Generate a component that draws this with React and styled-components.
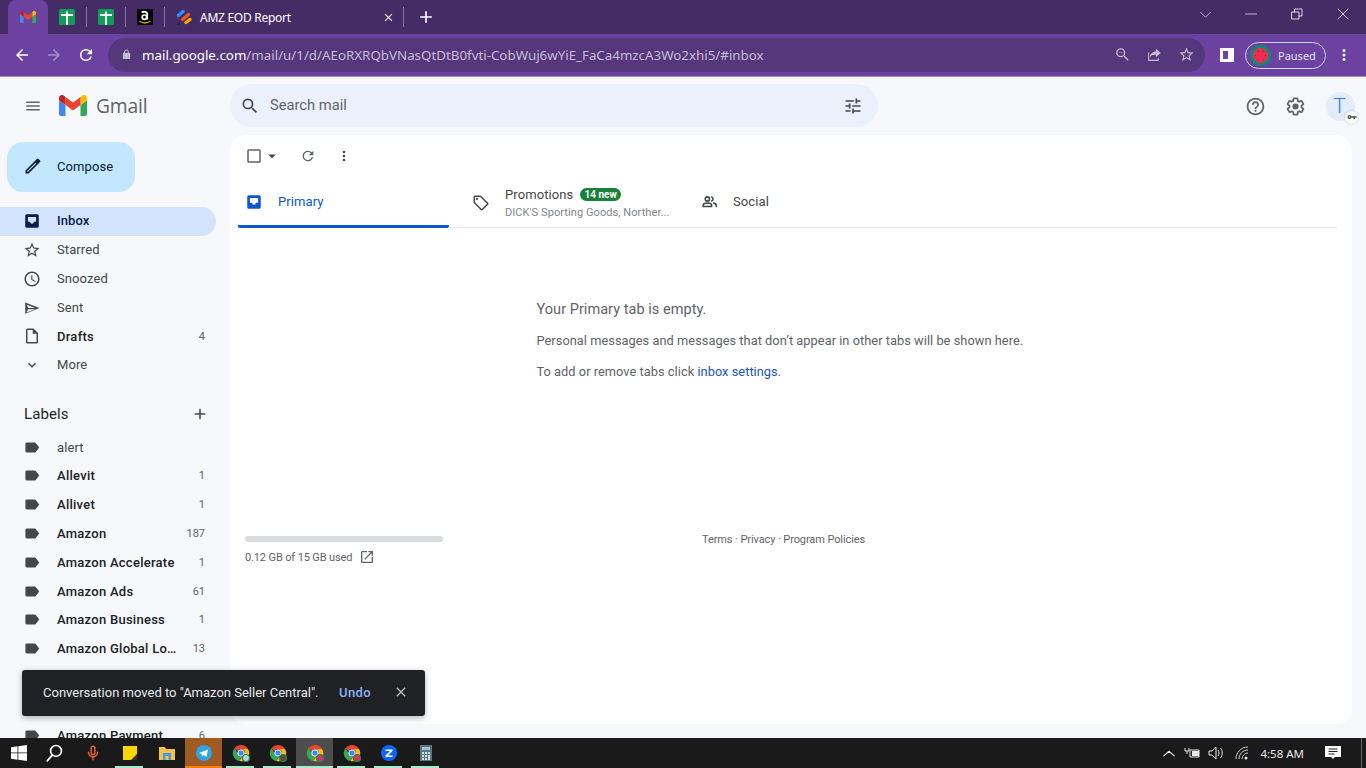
import React from "react";
import styled, { createGlobalStyle } from "styled-components";

const Global = createGlobalStyle`
  html, body { margin: 0; padding: 0; height: 100%; overflow: hidden; background: #f6f8fc; }
  #root { height: 100%; }
  * { box-sizing: border-box; }
`;

const Page = styled.div`
  width: 1366px; height: 768px; display: flex; flex-direction: column; overflow: hidden; position: relative;
  font-family: Roboto, "Liberation Sans", sans-serif; color: #202124;
`;

/* Chrome */
const TabStrip = styled.div`
  height: 34px; flex: none; background: #452c66; display: flex; align-items: flex-start; padding-left: 8px;
  font-family: "Noto Sans", "Open Sans", sans-serif; color: #fff;
`;
const ActiveTab = styled.div`
  width: 40px; height: 34px; background: #6b42a0; border-radius: 8px 8px 0 0; display: flex; align-items: center; justify-content: center;
`;
const PinnedTab = styled.div`
  width: 38px; height: 34px; display: flex; align-items: center; justify-content: center; flex: none;
`;
const Sep = styled.div`
  width: 1px; height: 20px; background: #8a76a4; margin-top: 7px; flex: none;
`;
const WideTab = styled.div`
  width: 238px; height: 34px; display: flex; align-items: center; padding-left: 10px; gap: 7px; font-size: 12px; flex: none;
`;
const TabTitle = styled.span` flex: 1; white-space: nowrap; font-size: 12px; letter-spacing: -0.27px; `;
const TabClose = styled.span` display: flex; margin-right: 8px; `;
const NewTab = styled.div` width: 44px; height: 34px; display: flex; align-items: center; justify-content: center; `;
const StripSpacer = styled.div` flex: 1; `;
const WinButtons = styled.div` display: flex; align-items: center; height: 28px; `;
const WinBtn = styled.div` width: 46px; height: 28px; display: flex; align-items: center; justify-content: center; `;

const Toolbar = styled.div`
  height: 43px; flex: none; background: #6c42a0; border-bottom: 1px solid #a58cc7; display: flex; align-items: center;
  font-family: "Noto Sans", "Open Sans", sans-serif;
`;
const NavIcons = styled.div` display: flex; align-items: center; width: 108px; padding-left: 13px; gap: 14px; flex: none; height: 100%; `;
const Omnibox = styled.div`
  width: 1097px; height: 34px; border-radius: 17px; background: #55377b; display: flex; align-items: center; padding: 0 8px 0 13px; flex: none; margin-bottom: 1px;
`;
const Url = styled.div`
  flex: 1; font-size: 13.33px; color: #c8bcd8; margin-left: 10px; white-space: nowrap; overflow: hidden;
  b { color: #fff; font-weight: 400; }
`;
const OmniIcons = styled.div` display: flex; gap: 15px; align-items: center; margin-right: 2px; `;
const SidePanelIcon = styled.div`
  width: 14px; height: 14px; border: 3px solid #fff; border-right-width: 6px; margin-left: 15px; flex: none;
`;
const PausedChip = styled.div`
  width: 81px; height: 27px; border-radius: 14px; border: 1px solid #c9d6ee; margin-left: 11px; display: flex; align-items: center; padding-left: 4px; gap: 7px; flex: none;
  color: #dfe3f4; font-size: 11px;
`;
const Kebab = styled.div` margin-left: 9px; display: flex; `;

/* Gmail */
const Mail = styled.div` flex: 1; min-height: 0; display: flex; flex-direction: column; background: #f6f8fc; `;
const TopBar = styled.div` height: 58px; flex: none; display: flex; align-items: center; padding-bottom: 1px; `;
const Brand = styled.div` width: 230px; flex: none; display: flex; align-items: center; padding-left: 24px; gap: 17px; `;
const BrandMark = styled.div` display: flex; align-items: center; gap: 9px; `;
const GmailWord = styled.span` font-family: "Open Sans", Roboto, sans-serif; font-size: 19.3px; color: #5f6368; letter-spacing: -0.2px; `;
const Search = styled.div`
  width: 648px; height: 43px; border-radius: 22px; background: #eaf1fb; display: flex; align-items: center; padding: 0 15px 0 10px;
  color: #5f6368; font-size: 14.7px;
`;
const SearchText = styled.span` flex: 1; margin-left: 10px; padding-bottom: 1px; `;
const TopRight = styled.div` margin-left: auto; display: flex; align-items: center; padding: 1px 11px 0 0; gap: 19px; `;
const Avatar = styled.div`
  width: 29px; height: 29px; border-radius: 50%; background: #e3ecfb; color: #2f7cf0; font-size: 21px; font-weight: 300;
  display: flex; align-items: center; justify-content: center; position: relative; margin-left: 1px; padding-right: 2px;
`;
const KeyBadge = styled.div`
  position: absolute; right: -3px; bottom: -3px; width: 13px; height: 13px; border-radius: 50%; background: #fff; box-shadow: 0 0 2px rgba(0,0,0,.3);
  display: flex; align-items: center; justify-content: center;
`;
const Body = styled.div` flex: 1; min-height: 0; display: flex; `;
const Side = styled.nav` width: 230px; flex: none; overflow: hidden; `;
const Compose = styled.div`
  margin: 7px 0 15px 7px; width: 128px; height: 50px; border-radius: 16px; background: #c2e7ff; display: flex; align-items: center; padding: 0 0 2px 16px; gap: 14px;
  font-size: 13px; color: #001d35; letter-spacing: 0.1px;
`;
const NavRow = styled.div`
  width: 216px; height: ${p => p.$h || "28.8px"}; flex: none; display: flex; align-items: center; padding: 0 11px ${p => p.$active ? 1 : 0}px 23px; border-radius: 0 16px 16px 0;
  font-size: 13px; gap: 16px; letter-spacing: ${p => (p.$bold ? "0.26px" : "0.1px")};
  background: ${p => (p.$active ? "#d3e3fd" : "transparent")};
  color: ${p => (p.$active ? "#041e49" : p.$bold ? "#202124" : "#444746")};
  font-weight: ${p => (p.$bold || p.$active ? 500 : 400)};
`;
const NavIcon = styled.span` width: 18px; height: 18px; flex: none; display: flex; align-items: center; justify-content: center; `;
const NavText = styled.span` flex: 1; white-space: nowrap; overflow: hidden; text-overflow: ellipsis; `;
const Count = styled.span` font-size: 11px; font-weight: 400; color: #5f6368; letter-spacing: 0; flex: none; `;
const LabelsHead = styled.div`
  width: 216px; height: 20px; margin: 24.8px 0 9.2px; display: flex; align-items: center; justify-content: space-between; padding: 0 7px 0 24px; font-size: 15px; color: #1f1f1f; letter-spacing: 0.1px;
`;
const Panel = styled.main`
  width: 1122px; height: 589px; background: #fff; border-radius: 16px; padding: 0 15px 0 8px; display: flex; flex-direction: column; flex: none;
`;
const ActionBar = styled.div` height: 41px; flex: none; display: flex; align-items: center; padding-left: 7px; `;
const ActionGap = styled.span` width: ${p => p.$w}px; flex: none; `;
const TabsRow = styled.div` height: 52px; flex: none; display: flex; border-bottom: 1px solid #e8eaed; `;
const MailTab = styled.div`
  width: ${p => p.$w}px; height: 52px; display: flex; align-items: center; padding-left: ${p => p.$pad}px; gap: ${p => p.$gap}px; flex: none;
  font-size: 13px; letter-spacing: 0.1px; color: ${p => (p.$active ? "#0b57d0" : "#444746")};
  border-bottom: ${p => (p.$active ? "3px solid #0b57d0" : "none")};
  border-radius: ${p => (p.$active ? "0 0 2px 2px" : 0)};
  padding-top: ${p => p.$pt || 0}px;
  padding-bottom: ${p => p.$pb || 0}px;
`;
const PromoTexts = styled.div` display: flex; flex-direction: column; gap: 4px; width: 170px; `;
const PromoTop = styled.div` display: flex; align-items: center; gap: 7px; `;
const NewBadge = styled.span`
  background: #188038; color: #fff; font-size: 10px; font-weight: 700; height: 13px; line-height: 13px; padding: 0 4px; border-radius: 7px; letter-spacing: 0;
`;
const PromoSub = styled.div` font-size: 11px; color: #80868b; white-space: nowrap; overflow: hidden; letter-spacing: 0.08px; `;
const Empty = styled.div` padding: 72px 0 0 298.5px; height: 306px; flex: none; font-size: 12.8px; color: #5f6368; letter-spacing: 0.04px; `;
const EmptyTitle = styled.div` font-size: 14.5px; color: #5f6368; height: 19px; line-height: 19px; margin-bottom: 13px; `;
const EmptyLine = styled.div` height: 18px; line-height: 18px; margin-bottom: 13px; `;
const Blue = styled.span` color: #1a56c4; `;
const Foot = styled.div` display: flex; padding-left: 7px; font-size: 11px; color: #5f6368; margin-top: 2px; letter-spacing: -0.13px; `;
const Storage = styled.div` width: 457px; `;
const Bar = styled.div` width: 198px; height: 6px; border-radius: 3px; background: #dadce0; margin-bottom: 7px; `;
const StorageText = styled.div` display: flex; align-items: center; gap: 7px; `;
const Terms = styled.div` margin-top: -3px; letter-spacing: -0.1px; `;
const Toast = styled.div`
  position: absolute; left: 22px; top: 670px; width: 403px; height: 46px; background: #202124; border-radius: 3px; color: #e8eaed; font-size: 13px;
  display: flex; align-items: center; padding: 0 0 2px 21px; box-shadow: 0 2px 6px rgba(0,0,0,.3);
`;
const ToastText = styled.span` width: 296px; white-space: nowrap; letter-spacing: 0; `;
const Undo = styled.span` color: #8ab4f8; font-weight: 500; width: 54px; letter-spacing: 0.4px; `;

/* Taskbar */
const Taskbar = styled.div`
  height: 30px; flex: none; background: #1a1a1a; display: flex; align-items: center; color: #fff; font-family: "Noto Sans", sans-serif;
`;
const TaskItem = styled.div`
  width: 37px; height: 30px; flex: none; display: flex; align-items: center; justify-content: center; position: relative;
  background: ${p => p.$bg || "transparent"};
  &::after {
    content: ""; position: absolute; bottom: 0; height: 2px;
    left: ${p => (p.$full ? 0 : "4px")}; right: ${p => (p.$full ? 0 : "5px")};
    background: ${p => p.$line || "transparent"};
  }
`;
const Tray = styled.div` margin-left: auto; display: flex; align-items: center; height: 100%; padding-right: 4px; `;
const Clock = styled.span` font-size: 11.5px; margin: 0 21px 0 1px; color: #e8e8e8; white-space: nowrap; `;
const TrayIcon = styled.span` display: flex; margin-right: ${p => p.$mr}px; `;
const ShowDesktop = styled.span` width: 1px; height: 100%; background: #666; margin-left: 20px; `;

/* Icons */
const Ico = ({ s = 18, c = "#444746", d, fill = true, sw = 2 }) => (
  <svg width={s} height={s} viewBox="0 0 24 24" fill={fill ? c : "none"} fillRule="evenodd" stroke={fill ? "none" : c} strokeWidth={sw} strokeLinecap="round" strokeLinejoin="round"><path d={d} /></svg>
);
const P = {
  inboxSolid: "M19 3H5a2 2 0 0 0-2 2v14a2 2 0 0 0 2 2h14a2 2 0 0 0 2-2V5a2 2 0 0 0-2-2zM6.500 6.500h11V13h-3a2.500 2.500 0 0 1-5 0h-3z",
  star: "M22 9.24l-7.19-.62L12 2 9.19 8.63 2 9.24l5.46 4.73L5.82 21 12 17.27 18.18 21l-1.63-7.03L22 9.24zM12 15.4l-3.76 2.27 1-4.28-3.32-2.88 4.38-.38L12 6.1l1.71 4.04 4.38.38-3.32 2.88 1 4.28L12 15.4z",
  clock: "M11.99 2C6.47 2 2 6.48 2 12s4.47 10 9.99 10C17.52 22 22 17.52 22 12S17.52 2 11.99 2zM12 20c-4.42 0-8-3.58-8-8s3.58-8 8-8 8 3.58 8 8-3.58 8-8 8zm.5-13H11v6l5.25 3.15.75-1.23-4.5-2.67V7z",
  send: "M3 4.500v15L22 12 3 4.500zm2 3 11 4.500H7l-2-4.500zM5 16.500l2-3h9L5 18v-1.500z",
  file: "M14 2H6a2 2 0 0 0-2 2v16a2 2 0 0 0 2 2h12a2 2 0 0 0 2-2V8l-6-6zm4 18H6V4h7v5h5v11z",
  chev: "M7.41 8.59 12 13.17l4.59-4.58L18 10l-6 6-6-6z",
  label: "M4 5h11a2 2 0 0 1 1.600.800L21.500 12l-4.900 6.200a2 2 0 0 1-1.600.800H4a2 2 0 0 1-2-2V7a2 2 0 0 1 2-2z",
  plus: "M19 13h-6v6h-2v-6H5v-2h6V5h2v6h6v2z",
  pencil: "M20.7 7.04a1 1 0 0 0 0-1.41l-2.34-2.34a1 1 0 0 0-1.41 0L3 17.25V21h3.75L20.7 7.04zM5 19v-1l10-10 1 1L6 19H5z",
  search: "M15.5 14h-.79l-.28-.27A6.47 6.47 0 0 0 16 9.5 6.5 6.5 0 1 0 9.5 16c1.61 0 3.09-.59 4.23-1.57l.27.28v.79l5 4.99L20.49 19l-4.99-5zm-6 0A4.5 4.5 0 1 1 14 9.5 4.5 4.5 0 0 1 9.5 14z",
  tune: "M3 17v2h6v-2H3zM3 5v2h10V5H3zm10 16v-2h8v-2h-8v-2h-2v6h2zM7 9v2H3v2h4v2h2V9H7zm14 4v-2H11v2h10zm-6-4h2V7h4V5h-4V3h-2v6z",
  help: "M11 18h2v-2h-2v2zm1-16C6.48 2 2 6.48 2 12s4.48 10 10 10 10-4.48 10-10S17.52 2 12 2zm0 18c-4.41 0-8-3.59-8-8s3.59-8 8-8 8 3.59 8 8-3.59 8-8 8zm0-14a4 4 0 0 0-4 4h2a2 2 0 1 1 4 0c0 2-3 1.75-3 5h2c0-2.25 3-2.5 3-5a4 4 0 0 0-4-4z",
  gear: "M13.85 22.25h-3.7c-.74 0-1.36-.54-1.45-1.27l-.27-1.89c-.27-.14-.53-.29-.79-.46l-1.8.72c-.7.26-1.47-.03-1.81-.65L2.2 15.53c-.35-.66-.2-1.44.36-1.88l1.53-1.19c-.01-.15-.02-.3-.02-.46 0-.15.01-.31.02-.46l-1.52-1.19c-.59-.45-.74-1.26-.37-1.88l1.85-3.19c.34-.62 1.11-.9 1.79-.63l1.81.73c.26-.17.52-.32.78-.46l.27-1.91c.09-.7.71-1.25 1.44-1.25h3.7c.74 0 1.36.54 1.45 1.27l.27 1.89c.27.14.53.29.79.46l1.8-.72c.71-.26 1.48.03 1.82.65l1.84 3.18c.36.66.2 1.44-.36 1.88l-1.52 1.19c.01.15.02.3.02.46s-.01.31-.02.46l1.52 1.19c.56.45.72 1.23.37 1.86l-1.86 3.22c-.34.62-1.11.9-1.8.63l-1.8-.72c-.26.17-.52.32-.78.46l-.27 1.91c-.1.68-.72 1.22-1.46 1.22zm-3.23-2h2.76l.37-2.55.53-.22c.44-.18.88-.44 1.34-.78l.45-.34 2.38.96 1.38-2.4-2.03-1.58.07-.56c.03-.26.06-.51.06-.78s-.03-.53-.06-.78l-.07-.56 2.03-1.58-1.39-2.4-2.39.96-.45-.35c-.42-.32-.87-.58-1.33-.77l-.52-.22-.37-2.55h-2.76l-.37 2.55-.53.21c-.44.19-.88.44-1.34.79l-.45.33-2.38-.95-1.39 2.39 2.03 1.58-.07.56a7 7 0 0 0-.06.79c0 .26.02.53.06.78l.07.56-2.03 1.58 1.38 2.4 2.39-.96.45.35c.43.33.86.58 1.33.77l.53.22.38 2.55zM12 8.500a3.500 3.500 0 1 0 0 7 3.500 3.500 0 0 0 0-7z",
  refresh: "M17.65 6.35A7.96 7.96 0 0 0 12 4a8 8 0 1 0 7.73 10h-2.08A6 6 0 1 1 12 6c1.66 0 3.14.69 4.22 1.78L13 11h7V4l-2.35 2.35z",
  dots: "M12 8a2 2 0 1 0 0-4 2 2 0 0 0 0 4zm0 2a2 2 0 1 0 0 4 2 2 0 0 0 0-4zm0 6a2 2 0 1 0 0 4 2 2 0 0 0 0-4z",
  box: "M19 5v14H5V5h14m0-2H5a2 2 0 0 0-2 2v14c0 1.1.9 2 2 2h14a2 2 0 0 0 2-2V5a2 2 0 0 0-2-2z",
  caret: "M7 10l5 5 5-5z",
  tag: "M21.41 11.58l-9-9A2 2 0 0 0 11 2H4a2 2 0 0 0-2 2v7c0 .55.22 1.05.59 1.42l9 9c.36.36.86.58 1.41.58s1.05-.22 1.41-.59l7-7c.37-.36.59-.86.59-1.41s-.23-1.06-.59-1.42zM13 20l-9-9V4h7l9 9-7 7zM6.500 5A1.500 1.500 0 1 1 6.500 8 1.500 1.500 0 0 1 6.500 5z",
  people: "M12 8.500a3 3 0 1 1-6 0 3 3 0 0 1 6 0zM15 5.700a3 3 0 0 1 0 5.600M3 19v-1.500C3 15.500 5.500 14 9 14s6 1.500 6 3.500V19zM18 14.300c2 .4 3.500 1.500 3.500 3.200V19",
  external: "M19 19H5V5h7V3H5a2 2 0 0 0-2 2v14a2 2 0 0 0 2 2h14a2 2 0 0 0 2-2v-7h-2v7zM14 3v2h3.590l-9.830 9.830 1.410 1.410L19 6.410V10h2V3h-7z",
  close: "M19 6.410 17.590 5 12 10.590 6.410 5 5 6.410 10.590 12 5 17.590 6.410 19 12 13.410 17.590 19 19 17.590 13.410 12z",
  menu: "M3 18h18v-2H3v2zm0-5h18v-2H3v2zm0-7v2h18V6H3z",
  back: "M20 11H7.830l5.590-5.590L12 4l-8 8 8 8 1.410-1.410L7.830 13H20v-2z",
  fwd: "M12 4l-1.410 1.410L16.170 11H4v2h12.170l-5.580 5.590L12 20l8-8z",
  lock: "M18 8h-1V6A5 5 0 0 0 7 6v2H6a2 2 0 0 0-2 2v10a2 2 0 0 0 2 2h12a2 2 0 0 0 2-2V10a2 2 0 0 0-2-2zM9 6a3 3 0 0 1 6 0v2H9V6z",
  zoomOut: "M15.500 14h-.790l-.280-.270A6.470 6.470 0 0 0 16 9.500 6.500 6.500 0 1 0 9.500 16c1.610 0 3.090-.590 4.230-1.570l.270.280v.790l5 4.990L20.490 19l-4.990-5zm-6 0A4.500 4.500 0 1 1 14 9.500 4.500 4.500 0 0 1 9.500 14zM7 9h5v1H7z",
  share: "M14 4l7 6-7 6v-3.500c-4 0-7 1-9 4 .500-4.500 3.500-8 9-9V4zM3 9v12h15v-4h-1.500v2.500h-12V9H3z",
  key: "M7 8a4 4 0 1 0 3.600 5.700H15v2.300h3v-2.300h3v-3.400H10.600A4 4 0 0 0 7 8zm0 2.500a1.500 1.500 0 1 1 0 3 1.500 1.500 0 0 1 0-3z",
};

const GmailLogo = ({ w = 28, h = 21 }) => (
  <svg width={w} height={h} viewBox="0 0 28 21">
    <path fill="#4285f4" d="M2 21h4.500V10L0 5.200V19a2 2 0 0 0 2 2z" />
    <path fill="#34a853" d="M21.500 21H26a2 2 0 0 0 2-2V5.200L21.500 10z" />
    <path fill="#fbbc04" d="M21.500 2v8L28 5.200V3c0-2.500-2.800-3.900-4.800-2.400z" />
    <path fill="#ea4335" d="M6.500 10V2L14 7.600 21.500 2v8L14 15.600z" />
    <path fill="#c5221f" d="M0 3v2.200L6.500 10V2L4.800.600C2.800-.900 0 .500 0 3z" />
  </svg>
);
const SheetsIcon = () => (
  <svg width="16" height="16" viewBox="0 0 16 16">
    <rect width="16" height="16" rx="1.500" fill="#0f9d58" />
    <path fill="#fff" d="M2 5h5V2.500h2V5h5v2H9v9H7V7H2z" />
  </svg>
);
const AmazonIcon = () => (
  <svg width="16" height="16" viewBox="0 0 16 16">
    <rect width="16" height="16" fill="#000" />
    <path d="M4.800 3.600c1.200-1.200 5.400-1.300 5.400 1.300v5.600" fill="none" stroke="#fff" strokeWidth="1.800" />
    <circle cx="7.400" cy="8.200" r="2.200" fill="none" stroke="#fff" strokeWidth="1.700" />
    <path d="M2.500 12.300c3 2 7.500 2 11 0" fill="none" stroke="#f90" strokeWidth="1.300" />
  </svg>
);
const EodIcon = () => (
  <svg width="18" height="18" viewBox="0 0 18 18" fill="none" strokeLinecap="round">
    <path d="M3.500 7.500 8 3.500" stroke="#2d8cff" strokeWidth="3.400" />
    <path d="M7.500 11.500 13.500 6.500" stroke="#f4511e" strokeWidth="3.400" />
    <path d="M11 14.500 15 11.500" stroke="#f9ab00" strokeWidth="3.400" />
    <path d="M1.500 17 5 13v4z" fill="#1a2a5e" />
  </svg>
);
const Watermelon = () => (
  <svg width="21" height="21" viewBox="0 0 21 21">
    <circle cx="10.500" cy="10.500" r="10.500" fill="#0f8a72" />
    <circle cx="10.500" cy="10.500" r="7.500" fill="#ee2c52" />
    {[0, 60, 120, 180, 240, 300].map(a => (
      <circle key={a} cx={10.5 + 5 * Math.cos(a * Math.PI / 180)} cy={10.5 + 5 * Math.sin(a * Math.PI / 180)} r=".6" fill="#8f1a35" />
    ))}
  </svg>
);
const ChromeIcon = ({ dot }) => (
  <svg width="18" height="18" viewBox="0 0 18 18">
    <path fill="#ea4335" d="M9 1a8 8 0 0 1 7 4H9a4 4 0 0 0-3.600 2.200L2.600 4A8 8 0 0 1 9 1z" />
    <path fill="#34a853" d="M2.600 4 6 9.800A4 4 0 0 0 9.700 13l-2.400 4A8 8 0 0 1 2.600 4z" />
    <path fill="#fbbc04" d="M16 5a8 8 0 0 1-8.700 12l3.400-5.300A4 4 0 0 0 12 6l-3-1z" />
    <circle cx="9" cy="9" r="3.200" fill="#4285f4" stroke="#fff" strokeWidth="1" />
    {dot && <circle cx="14" cy="14" r="3.500" fill={dot} stroke="#0f8a72" strokeWidth="1.200" />}
  </svg>
);

const navItems = [
  { t: "Inbox", i: P.inboxSolid, active: true, h: "28.6px" },
  { t: "Starred", i: P.star },
  { t: "Snoozed", i: P.clock },
  { t: "Sent", i: P.send },
  { t: "Drafts", i: P.file, bold: true, n: "4" },
  { t: "More", i: P.chev, s: 16, h: "28px" },
];
const labels = [
  ["alert", "", false],
  ["Allevit", "1", true],
  ["Allivet", "1", true],
  ["Amazon", "187", true],
  ["Amazon Accelerate", "1", true],
  ["Amazon Ads", "61", true],
  ["Amazon Business", "1", true],
  ["Amazon Global Logistics", "13", true],
  ["Amazon Handmade", "2", true],
  ["Amazon Seller Central", "", false],
  ["Amazon Payment", "6", true],
];

export default function App() {
  return (
    <Page>
      <Global />
      <TabStrip>
        <ActiveTab><GmailLogo w={16} h={12} /></ActiveTab>
        <PinnedTab><SheetsIcon /></PinnedTab>
        <Sep />
        <PinnedTab><SheetsIcon /></PinnedTab>
        <Sep />
        <PinnedTab><AmazonIcon /></PinnedTab>
        <Sep />
        <WideTab>
          <EodIcon />
          <TabTitle>AMZ EOD Report</TabTitle>
          <TabClose><Ico s={13} c="#fff" d={P.close} /></TabClose>
        </WideTab>
        <Sep />
        <NewTab><Ico s={20} c="#fff" d={P.plus} /></NewTab>
        <StripSpacer />
        <WinButtons>
          <WinBtn><Ico s={13} c="#efeaf6" fill={false} sw={1.300} d="M3 8l9 9 9-9" /></WinBtn>
          <WinBtn><Ico s={12} c="#fff" fill={false} sw={1.300} d="M1 12h22" /></WinBtn>
          <WinBtn><Ico s={12} c="#fff" fill={false} sw={1.600} d="M2 8h14v14H2zM7 8V2h15v14h-6" /></WinBtn>
          <WinBtn><Ico s={12} c="#fff" fill={false} sw={1.500} d="M2 2l20 20M22 2L2 22" /></WinBtn>
        </WinButtons>
      </TabStrip>
      <Toolbar>
        <NavIcons>
          <Ico s={18} c="#fff" d={P.back} />
          <Ico s={18} c="#a68fc5" d={P.fwd} />
          <Ico s={18} c="#fff" d={P.refresh} />
        </NavIcons>
        <Omnibox>
          <Ico s={11} c="#c3bacd" d={P.lock} />
          <Url><b>mail.google.com</b>/mail/u/1/d/AEoRXRQbVNasQtDtB0fvti-CobWuj6wYiE_FaCa4mzcA3Wo2xhi5/#inbox</Url>
          <OmniIcons>
            <Ico s={17} c="#c4bbd0" d={P.zoomOut} />
            <Ico s={17} c="#c4bbd0" d={P.share} />
            <Ico s={17} c="#c4bbd0" d={P.star} />
          </OmniIcons>
        </Omnibox>
        <SidePanelIcon />
        <PausedChip><Watermelon /><span>Paused</span></PausedChip>
        <Kebab><Ico s={18} c="#fff" d={P.dots} /></Kebab>
      </Toolbar>
      <Mail>
        <TopBar>
          <Brand>
            <Ico s={18} c="#5f6368" d={P.menu} />
            <BrandMark>
              <GmailLogo />
              <GmailWord>Gmail</GmailWord>
            </BrandMark>
          </Brand>
          <Search>
            <Ico s={20} c="#444746" d={P.search} />
            <SearchText>Search mail</SearchText>
            <Ico s={20} c="#444746" d={P.tune} />
          </Search>
          <TopRight>
            <Ico s={21} c="#5f6368" d={P.help} />
            <Ico s={21} c="#5f6368" d={P.gear} />
            <Avatar>T<KeyBadge><Ico s={12} c="#444" d={P.key} /></KeyBadge></Avatar>
          </TopRight>
        </TopBar>
        <Body>
          <Side>
            <Compose><Ico s={20} c="#001d35" d={P.pencil} /><span>Compose</span></Compose>
            {navItems.map(n => (
              <NavRow key={n.t} $active={n.active} $bold={n.bold} $h={n.h}>
                <NavIcon><Ico s={n.s || 18} c={n.active ? "#041e49" : "#444746"} d={n.i} /></NavIcon>
                <NavText>{n.t}</NavText>
                {n.n && <Count>{n.n}</Count>}
              </NavRow>
            ))}
            <LabelsHead>Labels<Ico s={18} c="#444746" d={P.plus} /></LabelsHead>
            {labels.map(([t, n, b]) => (
              <NavRow key={t} $bold={b}>
                <NavIcon><Ico s={17} c="#444746" d={P.label} /></NavIcon>
                <NavText>{t}</NavText>
                {n && <Count>{n}</Count>}
              </NavRow>
            ))}
          </Side>
          <Panel>
            <ActionBar>
              <Ico s={18} c="#5f6368" d={P.box} />
              <Ico s={18} c="#444746" d={P.caret} />
              <ActionGap $w={19} />
              <Ico s={16} c="#5f6368" d={P.refresh} />
              <ActionGap $w={20} />
              <Ico s={16} c="#444746" d={P.dots} />
            </ActionBar>
            <TabsRow>
              <MailTab $active $w={211} $pad={7} $gap={15} $pt={2}>
                <Ico s={18} c="#0b57d0" d={P.inboxSolid} />
                <span>Primary</span>
              </MailTab>
              <MailTab $w={241} $pad={23} $gap={15} $pt={2}>
                <Ico s={18} c="#444746" d={P.tag} />
                <PromoTexts>
                  <PromoTop><span>Promotions</span><NewBadge>14 new</NewBadge></PromoTop>
                  <PromoSub>DICK'S Sporting Goods, Norther...</PromoSub>
                </PromoTexts>
              </MailTab>
              <MailTab $w={200} $pad={11} $gap={15} $pb={2}>
                <Ico s={17} c="#444746" fill={false} sw={2.200} d={P.people} />
                <span>Social</span>
              </MailTab>
            </TabsRow>
            <Empty>
              <EmptyTitle>Your Primary tab is empty.</EmptyTitle>
              <EmptyLine>Personal messages and messages that don’t appear in other tabs will be shown here.</EmptyLine>
              <EmptyLine>To add or remove tabs click <Blue>inbox settings</Blue>.</EmptyLine>
            </Empty>
            <Foot>
              <Storage>
                <Bar />
                <StorageText>0.12 GB of 15 GB used <Ico s={16} c="#5f6368" d={P.external} /></StorageText>
              </Storage>
              <Terms>Terms · Privacy · Program Policies</Terms>
            </Foot>
          </Panel>
        </Body>
      </Mail>
      <Toast>
        <ToastText>Conversation moved to "Amazon Seller Central".</ToastText>
        <Undo>Undo</Undo>
        <Ico s={16} c="#bdc1c6" d={P.close} />
      </Toast>
      <Taskbar>
        <TaskItem>
          <svg width="16" height="16" viewBox="0 0 16 16"><path fill="#fff" d="M0 2.200 6.500 1.300V7.500H0zM7.300 1.200 16 0V7.500H7.300zM0 8.300H6.500V14.700L0 13.800zM7.300 8.300H16V16L7.300 14.800z" /></svg>
        </TaskItem>
        <TaskItem><Ico s={20} c="#fff" fill={false} sw={2} d="M18.500 9.500a6.500 6.500 0 1 1-13 0 6.500 6.500 0 0 1 13 0zM7.500 14.500l-6 7" /></TaskItem>
        <TaskItem><Ico s={18} c="#e8622c" fill={false} sw={2} d="M12 3a2.500 2.500 0 0 0-2.500 2.500v6a2.500 2.500 0 0 0 5 0v-6A2.500 2.500 0 0 0 12 3zM6 11a6 6 0 0 0 12 0M12 17v4" /></TaskItem>
        <TaskItem $line="#a6eccb"><svg width="14" height="14" viewBox="0 0 14 14"><rect width="14" height="14" fill="#ffd500" /><path d="M8 14l6-6v6z" fill="#333" /></svg></TaskItem>
        <TaskItem><svg width="16" height="14" viewBox="0 0 16 14"><path d="M0 1h6l1 2h9v11H0z" fill="#f5c343" /><rect x="4" y="7" width="8" height="7" fill="#3d9be9" /><rect x="6.500" y="10" width="3" height="4" fill="#f5c343" /></svg></TaskItem>
        <TaskItem $bg="#a05a24" $line="#f77f00" $full><svg width="16" height="16" viewBox="0 0 16 16"><circle cx="8" cy="8" r="8" fill="#2ca5e0" /><path d="M3 8l9-3.500-1.500 7.500-3-2-1.500 1.500-.300-2.500z" fill="#fff" /></svg></TaskItem>
        <TaskItem $line="#a6eccb"><ChromeIcon dot="#ccc" /></TaskItem>
        <TaskItem $line="#a6eccb"><ChromeIcon dot="#6a4a2a" /></TaskItem>
        <TaskItem $bg="#4d4d4d" $line="#a6eccb" $full><ChromeIcon dot="#ee2c52" /></TaskItem>
        <TaskItem $line="#a6eccb"><ChromeIcon dot="#ee2c52" /></TaskItem>
        <TaskItem $line="#a6eccb"><svg width="16" height="16" viewBox="0 0 16 16"><circle cx="8" cy="8" r="8" fill="#0b66ff" /><path d="M4.500 4.500h7v1.500l-4.500 4.500h4.500v1.500h-7V10.500L9 6H4.500z" fill="#fff" /></svg></TaskItem>
        <TaskItem $line="#a6eccb"><svg width="12" height="16" viewBox="0 0 12 16"><rect width="12" height="16" fill="#5d7482" /><rect x="2" y="2" width="8" height="3" fill="#9fc0d0" /><path d="M2 7h2v2H2zM5 7h2v2H5zM8 7h2v2H8zM2 10h2v2H2zM5 10h2v2H5zM8 10h2v5H8zM2 13h2v2H2zM5 13h2v2H5z" fill="#d5e0e6" /></svg></TaskItem>
        <Tray>
          <TrayIcon $mr={8}><Ico s={14} c="#e8e8e8" fill={false} sw={2} d="M3 17l9-8 9 8" /></TrayIcon>
          <TrayIcon $mr={7}><svg width="17" height="14" viewBox="0 0 17 14"><path d="M1 2v3h4V2M3 5v3M6 4h9v7H6z" fill="none" stroke="#e8e8e8" /><rect x="8" y="5" width="7" height="5" fill="#e8e8e8" /></svg></TrayIcon>
          <TrayIcon $mr={10}><svg width="17" height="14" viewBox="0 0 17 14"><path d="M1 5h3l4-4v12l-4-4H1zM10 4c1.300 1.800 1.300 4.200 0 6M12.500 2c2.300 3 2.300 7 0 10" fill="none" stroke="#e8e8e8" /></svg></TrayIcon>
          <TrayIcon $mr={9}><svg width="15" height="14" viewBox="0 0 15 14"><path d="M1 13c0-6.500 5-12 12-12M4 13c0-5 4-9 9-9M7 13c0-3 3-6 6-6" fill="none" stroke="#cfcfcf" /><circle cx="11" cy="12" r="1.500" fill="#e8e8e8" /></svg></TrayIcon>
          <Clock>4:58 AM</Clock>
          <svg width="16" height="16" viewBox="0 0 16 16"><path fill="#fff" d="M0 1h16v11h-6l-2 2-2-2H0z" /><path stroke="#222" d="M3.500 4h9M3.500 6.500h9M3.500 9h6" /></svg>
          <ShowDesktop />
        </Tray>
      </Taskbar>
    </Page>
  );
}
